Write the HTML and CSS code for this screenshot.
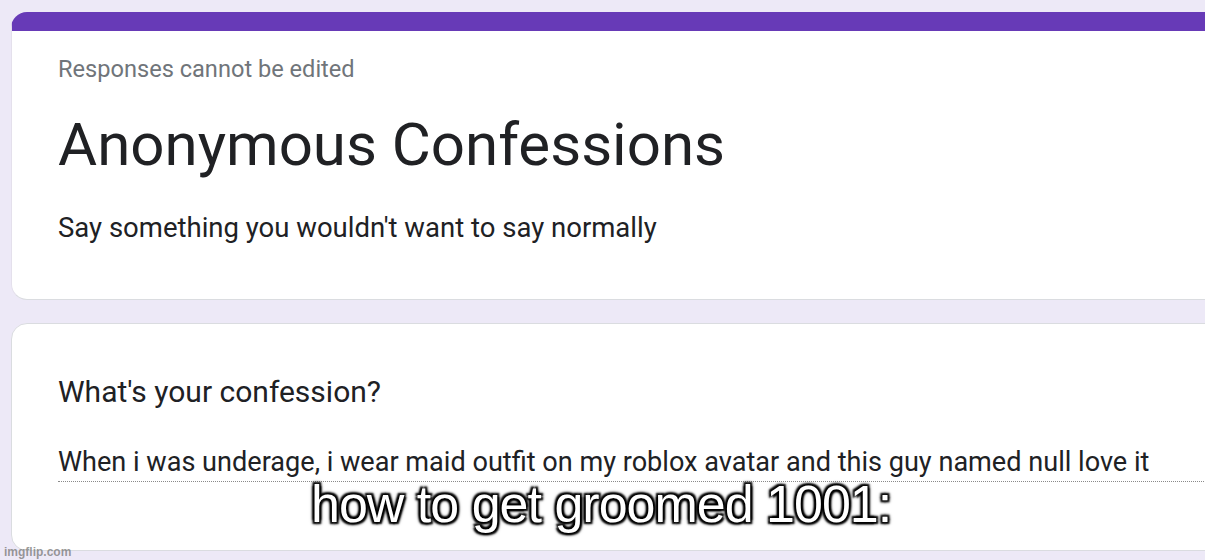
FILE: index.html
```html
<!DOCTYPE html>
<html lang="en">
<head>
  <meta charset="UTF-8">
  <title>Anonymous Confessions</title>
  <link rel="stylesheet" href="styles.css">
</head>
<body>

  <div class="form">
    <div class="card header-card">
      <div class="card-body">
        <p class="notice">Responses cannot be edited</p>
        <h1 class="title">Anonymous Confessions</h1>
        <p class="desc">Say something you wouldn't want to say normally</p>
      </div>
    </div>

    <div class="card">
      <div class="card-body">
        <p class="question">What's your confession?</p>
        <p class="answer">When i was underage, i wear maid outfit on my roblox avatar and this guy named null love it</p>
      </div>
    </div>
  </div>

  <div class="caption">how to get groomed 1001:</div>
  <div class="watermark">imgflip.com</div>

</body>
</html>
```

FILE: styles.css
```css
html, body {
  height: 100%;
}

body {
  margin: 0;
  background: #ede9f7;
  font-family: Roboto, 'Noto Sans', sans-serif;
  color: #202124;
  overflow: hidden;
  position: relative;
}

.form {
  padding: 12px 0 0 11px;
  display: flex;
  flex-direction: column;
  gap: 23px;
}

.card {
  width: 1260px;
  background: #fff;
  border: 1px solid #dadce0;
  border-radius: 16px;
  box-sizing: border-box;
}

.header-card {
  height: 288px;
  border-top: 19px solid #673ab7;
  border-left-color: #e4e0ec;
}

.card:not(.header-card) {
  height: 228px;
}

.card-body {
  padding: 0 0 0 46px;
}

p, h1 {
  margin: 0;
}

.notice {
  padding-top: 24px;
  font-size: 23.6px;
  line-height: 28px;
  color: #70757a;
}

.title {
  margin-top: 30px;
  font-size: 60px;
  font-weight: 400;
  line-height: 64px;
  color: #202124;
}

.desc {
  margin-top: 35px;
  font-size: 27.5px;
  line-height: 32px;
}

.question {
  padding-top: 51px;
  font-size: 30px;
  line-height: 34px;
}

.answer {
  margin-top: 36px;
  font-size: 27.1px;
  line-height: 34px;
  padding-bottom: 2px;
  border-bottom: 1px dotted #8a8a8a;
}

.caption {
  position: absolute;
  left: 311px;
  top: 474px;
  font-family: 'Liberation Sans', Arial, sans-serif;
  font-size: 52px;
  line-height: 60px;
  letter-spacing: -1px;
  color: #fff;
  text-shadow:
    -2px -2px 2px #000, 2px -2px 2px #000,
    -2px 2px 2px #000, 2px 2px 2px #000,
    0 0 5px #000;
}

.watermark {
  position: absolute;
  left: 4px;
  bottom: 1px;
  font-family: 'Liberation Sans', Arial, sans-serif;
  font-size: 12px;
  font-weight: bold;
  color: rgba(120, 120, 120, 0.75);
}
```
